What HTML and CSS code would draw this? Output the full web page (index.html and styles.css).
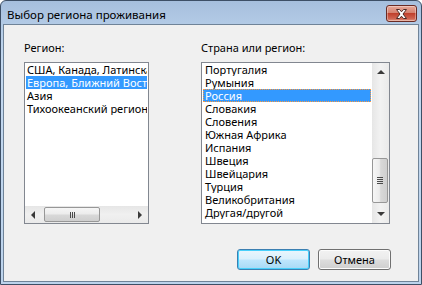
FILE: index.html
```html
<!DOCTYPE html>
<html lang="ru">
<head>
<meta charset="utf-8">
<title>Выбор региона проживания</title>
<link rel="stylesheet" href="styles.css">
</head>
<body>
<div class="window">
  <div class="titlebar">
    <span class="title">Выбор региона проживания</span>
    <button class="close" aria-label="Закрыть">
      <svg width="13" height="10" viewBox="0 0 13 10">
        <path d="M1.5 0.5h3l2 2.3 2-2.3h3l-3.5 4.5 3.5 4.5h-3l-2-2.3-2 2.3h-3l3.5-4.5z" fill="#fff" stroke="#4a2a26" stroke-width="1" stroke-linejoin="round"/>
      </svg>
    </button>
  </div>
  <div class="client">
    <div class="columns">
      <div class="col">
        <div class="label">Регион:</div>
        <div class="listbox">
          <div class="items items-h">
            <div class="item">США, Канада, Латинская Америка</div>
            <div class="item selected">Европа, Ближний Восток и Африка</div>
            <div class="item">Азия</div>
            <div class="item">Тихоокеанский регион</div>
          </div>
          <div class="hscroll">
            <span class="arrow arrow-left"></span>
            <div class="htrack">
              <div class="hthumb"><span class="grip-v"></span><span class="grip-v"></span><span class="grip-v"></span></div>
            </div>
            <span class="arrow arrow-right"></span>
          </div>
        </div>
      </div>
      <div class="col">
        <div class="label">Страна или регион:</div>
        <div class="listbox listbox-v">
          <div class="items items-v">
            <div class="item">Португалия</div>
            <div class="item">Румыния</div>
            <div class="item selected focused">Россия</div>
            <div class="item">Словакия</div>
            <div class="item">Словения</div>
            <div class="item">Южная Африка</div>
            <div class="item">Испания</div>
            <div class="item">Швеция</div>
            <div class="item">Швейцария</div>
            <div class="item">Турция</div>
            <div class="item">Великобритания</div>
            <div class="item">Другая/другой</div>
          </div>
          <div class="vscroll">
            <span class="arrow arrow-up"></span>
            <div class="vtrack">
              <div class="vthumb"><span class="grip-h"></span><span class="grip-h"></span><span class="grip-h"></span><span class="grip-h"></span></div>
            </div>
            <span class="arrow arrow-down"></span>
          </div>
        </div>
      </div>
    </div>
    <div class="buttons">
      <button class="btn btn-default">OK</button>
      <button class="btn">Отмена</button>
    </div>
  </div>
</div>
</body>
</html>
```
FILE: styles.css
```css
* { box-sizing: border-box; }
html, body { margin: 0; padding: 0; background: #ffffff; }
body {
  width: 422px;
  height: 285px;
  font-family: "Noto Sans", "Open Sans", sans-serif;
  font-size: 11px;
  color: #000;
}
.window {
  width: 422px;
  height: 285px;
  border: 1px solid #3d4f66;
  border-radius: 6px 6px 0 0;
  background: linear-gradient(to bottom, #a6bfdd 0px, #b3cbe6 24px, #c3d8ef 60px, #bcd3ec 100%);
  display: flex;
  flex-direction: column;
}
.titlebar {
  height: 23px;
  display: flex;
  justify-content: space-between;
  align-items: flex-start;
  padding: 0 4px 0 6px;
}
.title {
  font-size: 11.5px;
  line-height: 16px;
  margin-top: 6px;
  color: #000;
}
.close {
  width: 31px;
  height: 17px;
  margin-top: 4px;
  padding: 0;
  border: 1px solid #6a2b24;
  border-radius: 3px;
  background: linear-gradient(to bottom, #e7a898 0%, #d58270 45%, #c0402c 50%, #cf6552 85%, #e09a85 100%);
  box-shadow: inset 0 0 0 1px rgba(255,255,255,0.35);
  display: flex;
  align-items: center;
  justify-content: center;
}
.client {
  flex: 1;
  margin: 0 2px 2px 2px;
  border: 1px solid #6f8398;
  background: #f0f0f0;
  padding: 15px 27px 11px 20px;
  display: flex;
  flex-direction: column;
}
.columns {
  display: grid;
  grid-template-columns: 125px 189px;
  column-gap: 52px;
}
.label {
  line-height: 15px;
  height: 15px;
  margin-bottom: 7px;
  white-space: nowrap;
}
.listbox {
  height: 162px;
  border: 1px solid #828790;
  background: #fff;
  padding: 0;
  display: flex;
  flex-direction: column;
  overflow: hidden;
  position: relative;
}
.listbox-v { flex-direction: row; }
.items {
  flex: 1;
  padding: 0 1px;
  overflow: hidden;
}
.item {
  height: 13px;
  line-height: 13px;
  padding-left: 1px;
  white-space: nowrap;
  overflow: hidden;
}
.items-v .item { padding-left: 2px; }
.item.selected { background: #3399ff; color: #fff; }
.item.focused { outline: 1px dotted #ff9a3c; outline-offset: -1px; }

/* scrollbars */
.hscroll {
  height: 17px;
  display: flex;
  align-items: center;
  background: linear-gradient(to bottom, #e6e6e6, #f0f0f0 50%, #eaeaea);
}
.htrack { flex: 1; height: 17px; position: relative; }
.hthumb {
  position: absolute;
  left: 4px;
  top: 1px;
  width: 56px;
  height: 15px;
  border: 1px solid #979797;
  border-radius: 2px;
  background: linear-gradient(to bottom, #f6f6f6 0%, #ececec 45%, #d8d8d8 55%, #cfcfcf 100%);
  display: flex;
  justify-content: center;
  align-items: center;
  gap: 1px;
}
.grip-v { width: 1px; height: 6px; background: #4a4a4a; }
.vscroll {
  width: 17px;
  display: flex;
  flex-direction: column;
  align-items: center;
  background: linear-gradient(to right, #e6e6e6, #f2f2f2 50%, #eaeaea);
}
.vtrack { flex: 1; width: 17px; position: relative; }
.vthumb {
  position: absolute;
  left: 0;
  top: 79px;
  width: 16px;
  height: 45px;
  border: 1px solid #979797;
  border-radius: 2px;
  background: linear-gradient(to right, #f6f6f6 0%, #ececec 45%, #d8d8d8 55%, #cfcfcf 100%);
  display: flex;
  flex-direction: column;
  justify-content: center;
  align-items: center;
  gap: 1px;
}
.grip-h { width: 6px; height: 1px; background: #4a4a4a; }
.arrow { width: 0; height: 0; flex: none; }
.arrow-left {
  margin: 0 5px 0 6px;
  border-top: 4px solid transparent;
  border-bottom: 4px solid transparent;
  border-right: 4px solid #3a3a3a;
}
.arrow-right {
  margin: 0 6px 0 5px;
  border-top: 4px solid transparent;
  border-bottom: 4px solid transparent;
  border-left: 4px solid #3a3a3a;
}
.arrow-up {
  margin: 7px 0 5px;
  border-left: 4px solid transparent;
  border-right: 4px solid transparent;
  border-bottom: 4px solid #3a3a3a;
}
.arrow-down {
  margin: 5px 0 7px;
  border-left: 4px solid transparent;
  border-right: 4px solid transparent;
  border-top: 4px solid #3a3a3a;
}

/* buttons */
.buttons {
  margin-top: 25px;
  display: flex;
  justify-content: flex-end;
  gap: 8px;
}
.btn {
  width: 73px;
  height: 21px;
  padding: 0;
  font-family: inherit;
  font-size: 11px;
  color: #000;
  border: 1px solid #707070;
  border-radius: 3px;
  background: linear-gradient(to bottom, #f2f2f2 0%, #ebebeb 48%, #dddddd 52%, #cfcfcf 100%);
  box-shadow: inset 0 0 0 1px #fcfcfc;
}
.btn-default {
  border-color: #3c7fb1;
  background: linear-gradient(to bottom, #eaf6fd 0%, #d9f0fc 48%, #bee6fd 52%, #a7d9f5 100%);
  box-shadow: inset 0 0 0 1px #48d0fb;
}
```
